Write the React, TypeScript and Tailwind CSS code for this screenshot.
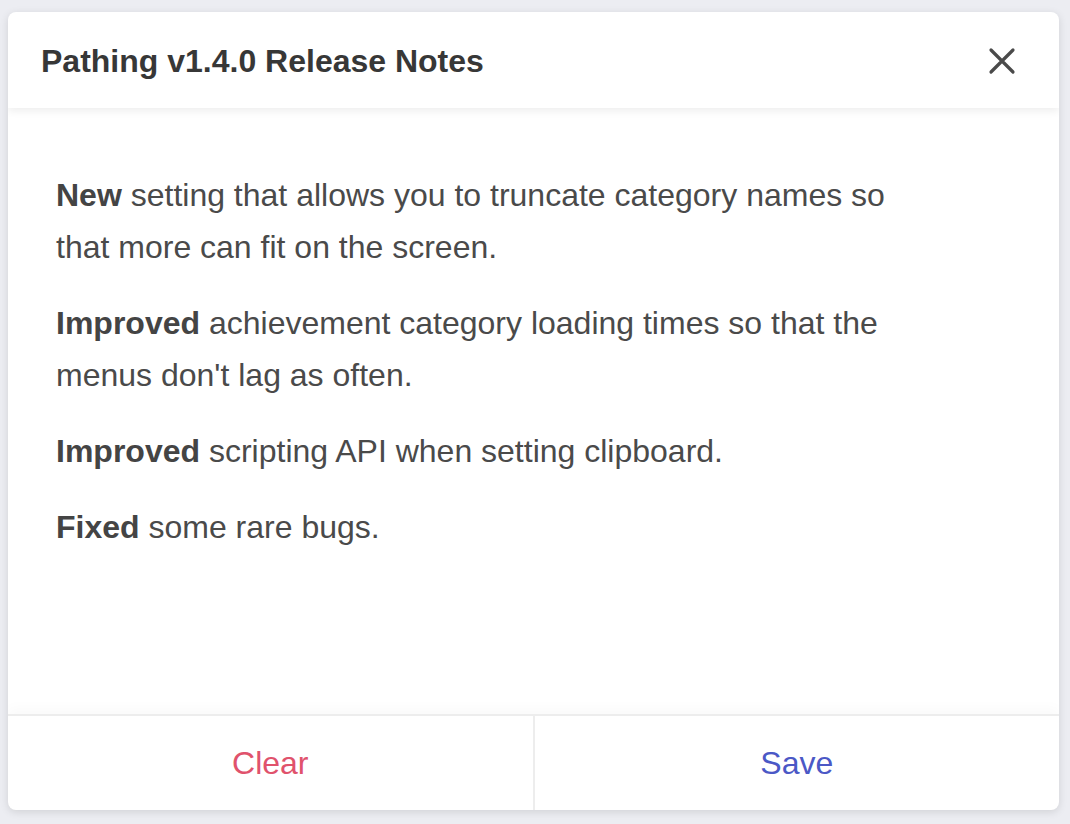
const notes = [
  { tag: 'New', text: 'setting that allows you to truncate category names so that more can fit on the screen.' },
  { tag: 'Improved', text: "achievement category loading times so that the menus don't lag as often." },
  { tag: 'Improved', text: 'scripting API when setting clipboard.' },
  { tag: 'Fixed', text: 'some rare bugs.' },
];

export default function App() {
  return (
    <div className="w-[1070px] h-[824px] bg-[#ecedf2] pt-3 pl-2 font-['Liberation_Sans',Arial,sans-serif]">
      <div className="w-[1051px] h-[798px] bg-white rounded-lg shadow-[0_2px_8px_rgba(0,0,0,0.12)] flex flex-col overflow-hidden">
        {/* Header */}
        <div className="h-24 flex items-center justify-between pl-[33px] pr-[43px] shadow-[0_3px_8px_rgba(0,0,0,0.07)] relative z-10">
          <h1 className="text-[32px] font-bold text-[#373737] pt-0.5">Pathing v1.4.0 Release Notes</h1>
          <svg width="28" height="28" viewBox="0 0 28 28" className="text-[#4a4a4a] mt-0.5">
            <path d="M3 3 L25 25 M25 3 L3 25" stroke="currentColor" strokeWidth="3.2" strokeLinecap="round" fill="none" />
          </svg>
        </div>

        {/* Body */}
        <div className="flex-1 pt-[61px] pl-12 pr-12">
          <div className="max-w-[860px] flex flex-col gap-6 text-[32px] leading-[52px] text-[#4a4a4a]">
            {notes.map((n, i) => (
              <p key={i}>
                <b className="text-[#444]">{n.tag}</b> {n.text}
              </p>
            ))}
          </div>
        </div>

        {/* Footer */}
        <div className="h-24 flex border-t-2 border-[#ededed] shadow-[0_-6px_12px_rgba(0,0,0,0.025)]">
          <button className="flex-1 text-[32px] text-[#e0526c]">Clear</button>
          <div className="w-0.5 bg-[#ededed]" />
          <button className="flex-1 text-[32px] text-[#4b58c6]">Save</button>
        </div>
      </div>
    </div>
  );
}
